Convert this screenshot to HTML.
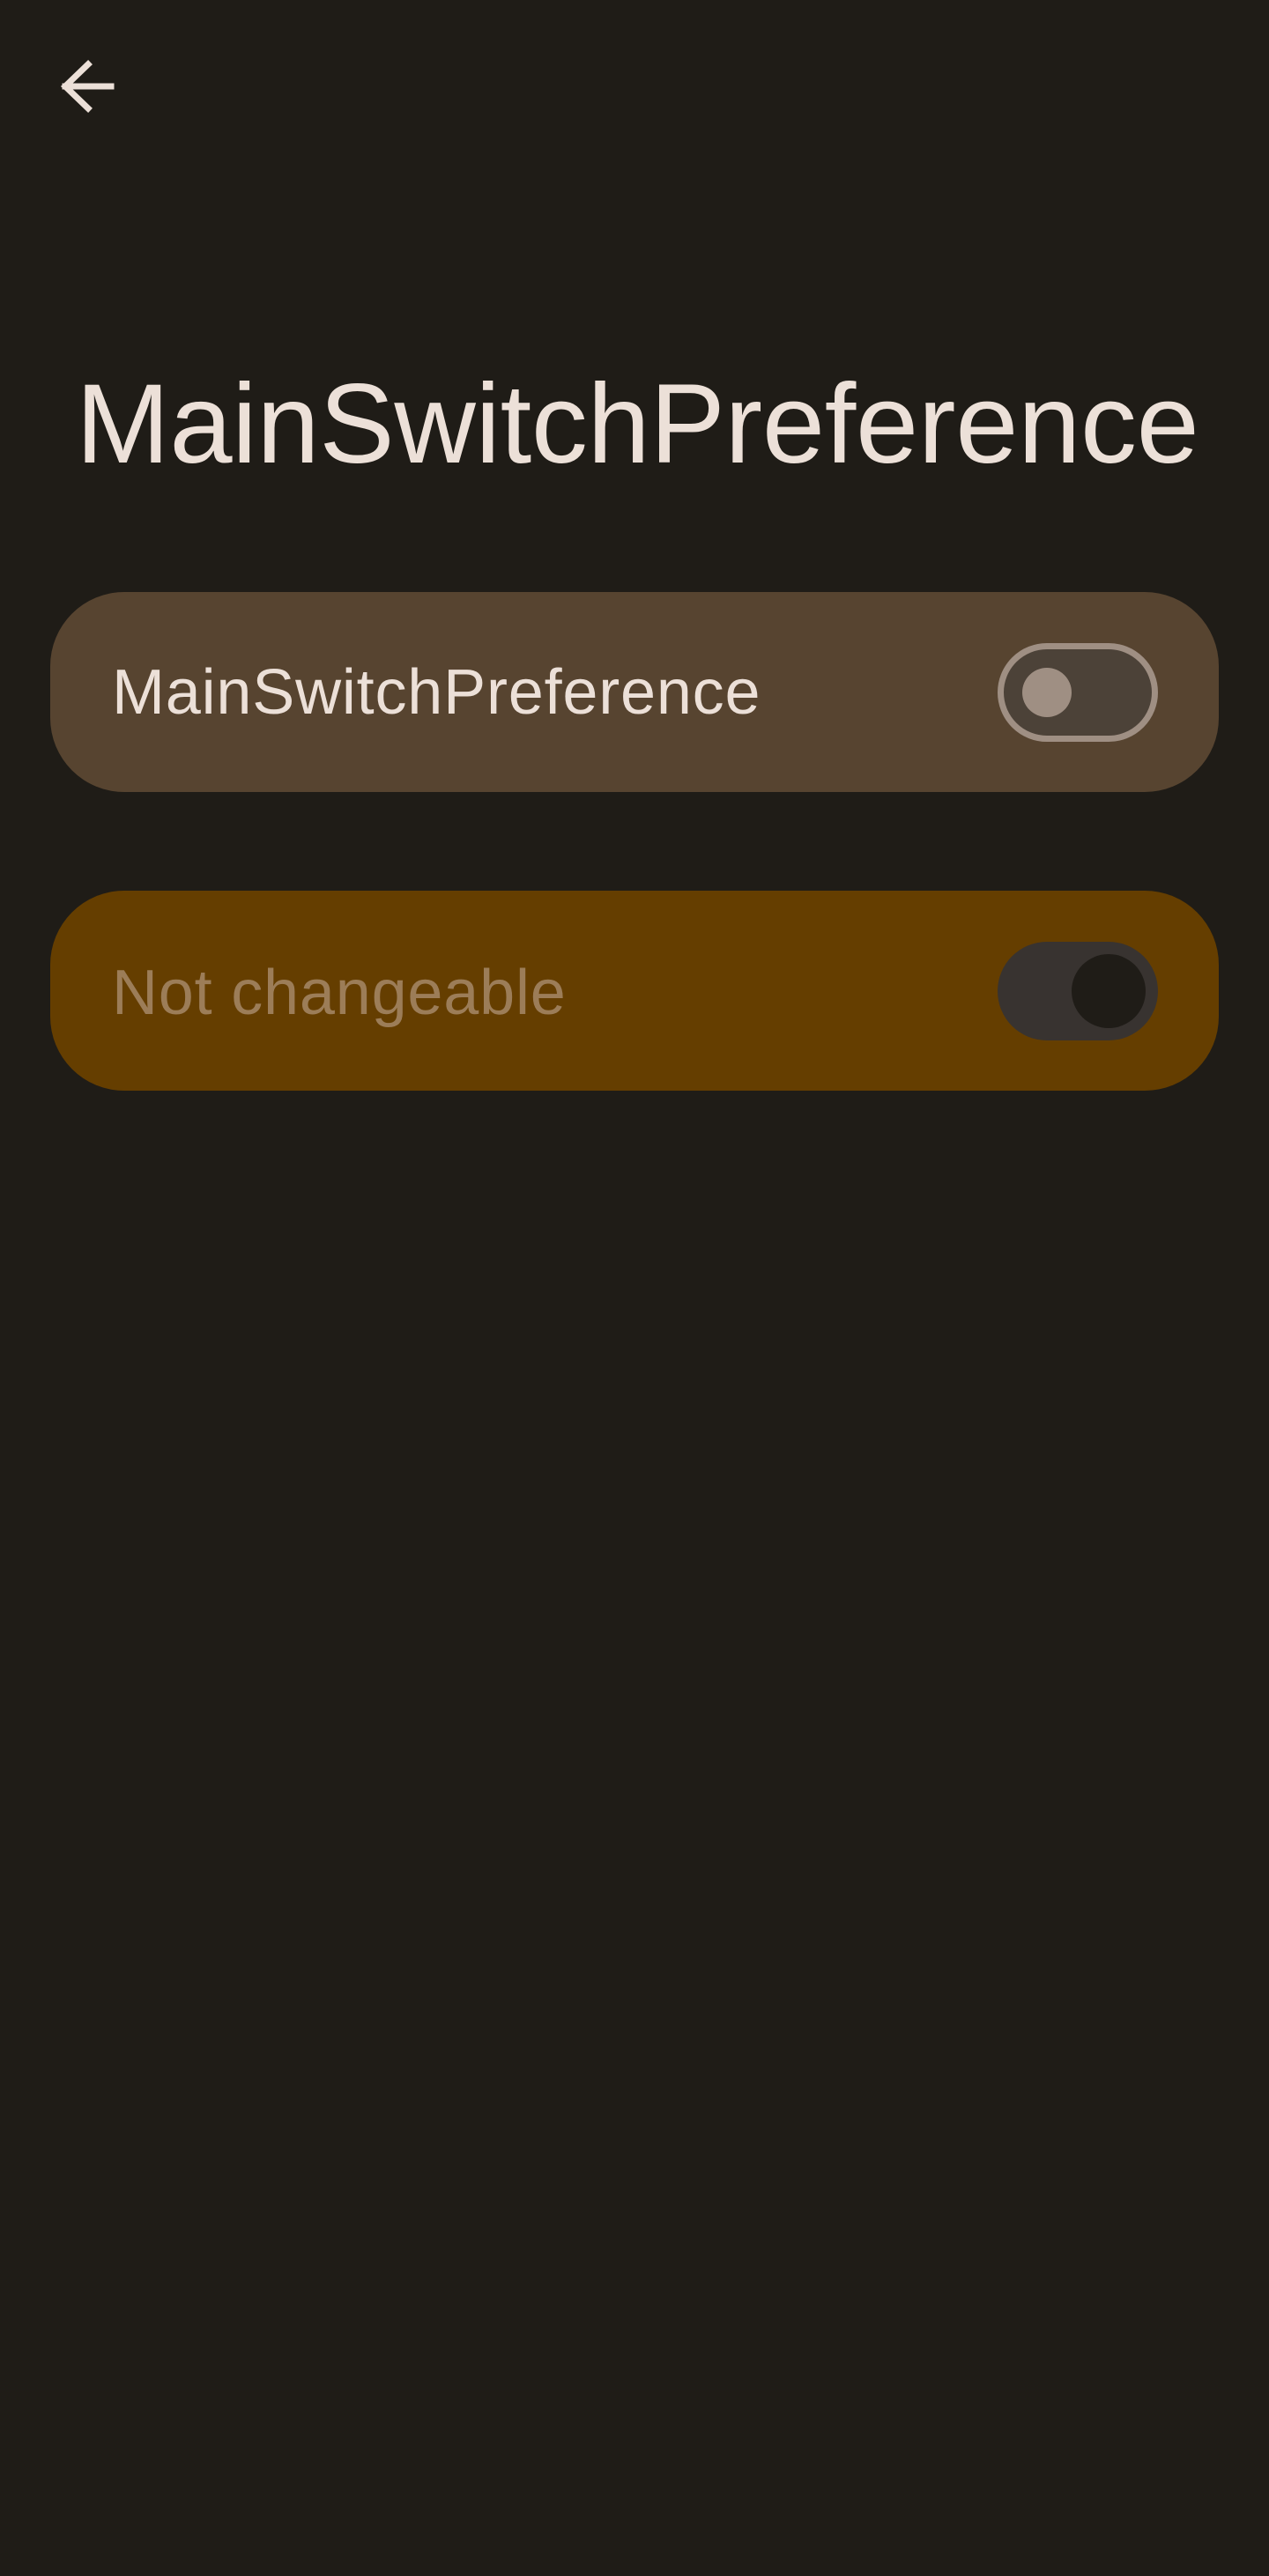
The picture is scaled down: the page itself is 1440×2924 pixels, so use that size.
<!DOCTYPE html>
<html><head><meta charset="utf-8"><style>
html,body{margin:0;padding:0;background:#1f1c17;width:1440px;height:2924px;overflow:hidden;font-family:"Liberation Sans",sans-serif;}
.abs{position:absolute}
.title{left:86px;top:407px;font-size:128px;color:#ece0d8;line-height:150px;white-space:nowrap;letter-spacing:-0.3px}
.card{left:57px;width:1326px;height:227px;border-radius:84px}
.t{position:absolute;left:70px;font-size:72px;line-height:80px;white-space:nowrap;letter-spacing:0.8px}
</style></head><body>
<svg class="abs" style="left:0;top:0" width="160" height="160">
<path d="M126 98 H74 M100 73 L74 98 L100 123" stroke="#ece0d8" stroke-width="7" fill="none" stroke-linecap="square"/>
</svg>
<div class="abs title">MainSwitchPreference</div>
<div class="abs card" style="top:672px;background:#574430">
  <div class="t" style="top:74px;color:#ece0d8">MainSwitchPreference</div>
  <div class="abs" style="left:1075px;top:58px;width:168px;height:98px;border:7px solid #9f8f83;border-radius:60px;background:#4c4238"></div>
  <div class="abs" style="left:1103px;top:86px;width:56px;height:56px;border-radius:50%;background:#9f8f83"></div>
</div>
<div class="abs card" style="top:1011px;background:#653e00">
  <div class="t" style="top:76px;color:#9c7d58">Not changeable</div>
  <div class="abs" style="left:1075px;top:58px;width:182px;height:112px;border-radius:56px;background:#383330"></div>
  <div class="abs" style="left:1159px;top:72px;width:84px;height:84px;border-radius:50%;background:#1f1c17"></div>
</div>
</body></html>
